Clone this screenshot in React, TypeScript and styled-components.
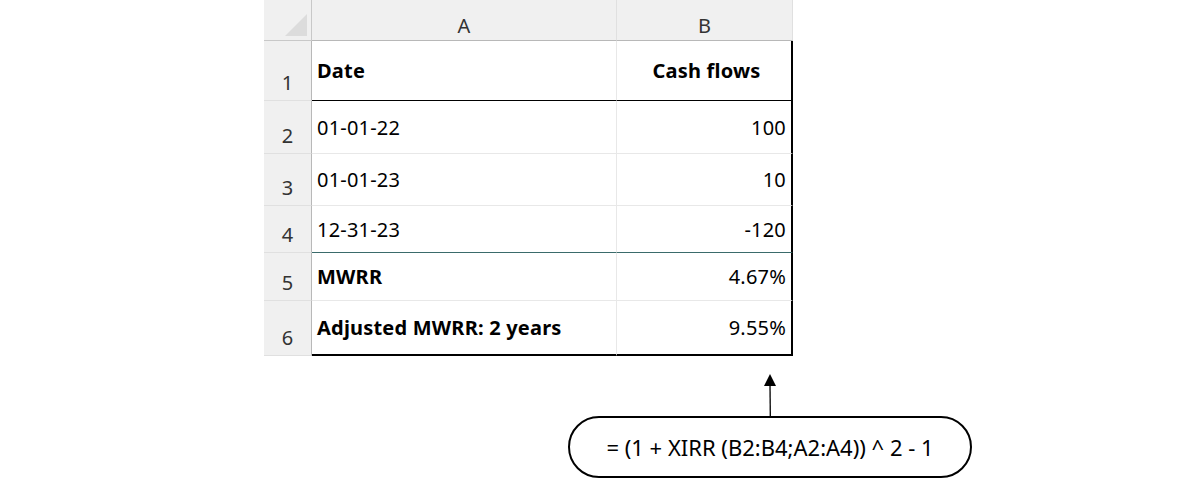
import { Fragment } from "react";
import styled, { createGlobalStyle } from "styled-components";

const Global = createGlobalStyle`
  body { margin: 0; background: #fff; font-family: "Noto Sans", Lato, sans-serif; }
`;

const Page = styled.div`
  width: 1185px;
  height: 478px;
  display: flex;
  flex-direction: column;
  align-items: flex-start;
  padding-left: 264px;
  box-sizing: border-box;
`;

const Sheet = styled.div`
  display: grid;
  grid-template-columns: 48px 305px 176px 2px;
  grid-template-rows: 41px 60px 53px 52px 47px 48px 55px 4px;
  background: #f0f0f0;
  width: 531px;
`;

const Corner = styled.div`
  border-right: 1px solid #c8c8c8;
  border-bottom: 1px solid #c8c8c8;
  position: relative;
  &::after {
    content: "";
    position: absolute;
    right: 4px;
    bottom: 4px;
    border-left: 22px solid transparent;
    border-bottom: 22px solid #dcdcdc;
  }
`;

const ColHead = styled.div`
  border-bottom: 1px solid #b8b8b8;
  border-right: 1px solid #e0e0e0;
  display: flex;
  align-items: center;
  justify-content: center;
  padding-top: 10px;
  font-size: 20px;
  color: #333;
`;

const RowHead = styled.div`
  border-right: 1px solid #b8b8b8;
  border-bottom: 1px solid #e0e0e0;
  display: flex;
  align-items: flex-end;
  justify-content: center;
  padding-bottom: 4px;
  font-size: 20px;
  color: #333;
  box-sizing: border-box;
`;

const Cell = styled.div<{ $align?: string; $bold?: boolean; $line?: string; $edge?: boolean; $thick?: boolean }>`
  background: #fff;
  display: flex;
  align-items: center;
  justify-content: ${(p) => p.$align ?? "flex-start"};
  padding: 0 5px 0 5px;
  padding-right: ${(p) => (p.$align === "center" ? "0" : "5px")};
  font-size: 20px;
  letter-spacing: 0.2px;
  font-weight: ${(p) => (p.$bold ? 700 : 400)};
  color: #000;
  border-bottom: ${(p) => (p.$thick ? "2px" : "1px")} solid ${(p) => p.$line ?? "#e8e8e8"};
  border-right: ${(p) => (p.$edge ? "2px solid #000" : "1px solid #e8e8e8")};
  box-sizing: border-box;
`;

const Gap = styled.div<{ $full?: boolean }>`
  background: #fff;
  ${(p) => p.$full && "grid-column: 1 / 5;"}
`;

const Callout = styled.div`
  margin-left: 304px;
  margin-top: 14px;
  display: flex;
  flex-direction: column;
  align-items: center;
  width: 404px;
`;

const Pill = styled.div`
  width: 404px;
  height: 62px;
  box-sizing: border-box;
  border: 2px solid #000;
  border-radius: 31px;
  display: flex;
  align-items: center;
  justify-content: center;
  font-size: 22px;
  color: #000;
`;

const rows = [
  ["Date", "Cash flows", true, "#000"],
  ["01-01-22", "100", false, undefined],
  ["01-01-23", "10", false, undefined],
  ["12-31-23", "-120", false, "#3a6b6b"],
  ["MWRR", "4.67%", true, undefined],
  ["Adjusted MWRR: 2 years", "9.55%", true, "#000"],
] as const;

export default function App() {
  return (
    <Page>
      <Global />
      <Sheet>
        <Corner />
        <ColHead>A</ColHead>
        <ColHead>B</ColHead>
        <Gap />
        {rows.map(([a, b, bold, line], i) => (
          <Fragment key={i}>
            <RowHead>{i + 1}</RowHead>
            <Cell $bold={bold} $line={line} $thick={i === 5}>{a}</Cell>
            <Cell $align={i === 0 ? "center" : "flex-end"} $bold={i === 0} $line={line} $thick={i === 5} $edge>
              {b}
            </Cell>
            <Gap />
          </Fragment>
        ))}
        <Gap $full />
      </Sheet>
      <Callout>
        <svg width="20" height="42" viewBox="0 0 20 42">
          <polygon points="10,0 4,12 16,12" fill="#000" />
          <line x1="10" y1="10" x2="10.3" y2="42" stroke="#000" strokeWidth="1.3" />
        </svg>
        <Pill>= (1 + XIRR (B2:B4;A2:A4)) ^ 2 - 1</Pill>
      </Callout>
    </Page>
  );
}
